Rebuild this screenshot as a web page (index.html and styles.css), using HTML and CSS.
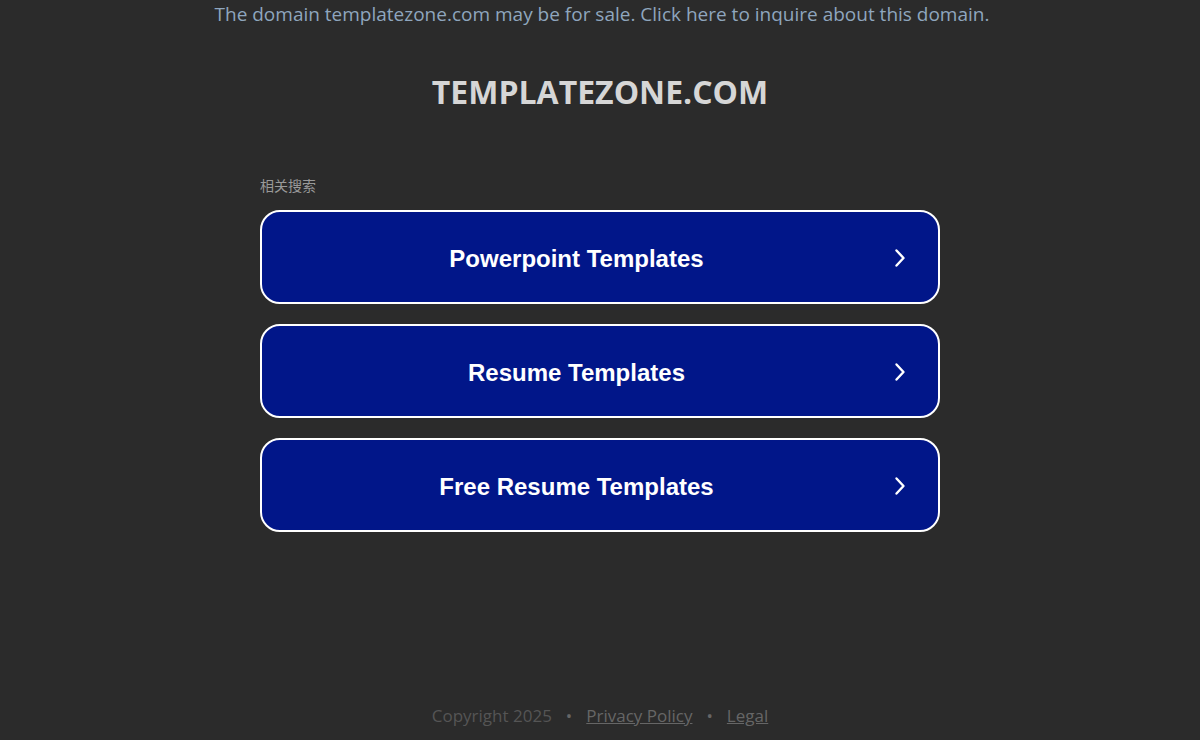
FILE: index.html
```html
<!DOCTYPE html>
<html lang="en">
<head>
<meta charset="utf-8">
<title>templatezone.com</title>
<link rel="stylesheet" href="styles.css">
</head>
<body>
<div class="page">
  <header class="top">
    <a class="sale" href="#">The domain templatezone.com may be for sale. Click here to inquire about this domain.</a>
    <h1 class="domain">TEMPLATEZONE.COM</h1>
  </header>
  <main class="content">
    <div class="label">相关搜索</div>
    <ul class="links">
      <li><a class="btn" href="#"><span class="btn-text">Powerpoint Templates</span><svg class="chev" viewBox="0 0 14 20" width="14" height="20"><path d="M3.5 2.5 L10.5 10 L3.5 17.5" fill="none" stroke="#fff" stroke-width="2.4" stroke-linecap="round" stroke-linejoin="round"/></svg></a></li>
      <li><a class="btn" href="#"><span class="btn-text">Resume Templates</span><svg class="chev" viewBox="0 0 14 20" width="14" height="20"><path d="M3.5 2.5 L10.5 10 L3.5 17.5" fill="none" stroke="#fff" stroke-width="2.4" stroke-linecap="round" stroke-linejoin="round"/></svg></a></li>
      <li><a class="btn" href="#"><span class="btn-text">Free Resume Templates</span><svg class="chev" viewBox="0 0 14 20" width="14" height="20"><path d="M3.5 2.5 L10.5 10 L3.5 17.5" fill="none" stroke="#fff" stroke-width="2.4" stroke-linecap="round" stroke-linejoin="round"/></svg></a></li>
    </ul>
  </main>
  <footer class="foot">
    <span>Copyright 2025</span>
    <span class="dot">•</span>
    <a href="#">Privacy Policy</a>
    <span class="dot">•</span>
    <a href="#">Legal</a>
  </footer>
</div>
</body>
</html>
```
FILE: styles.css
```css
html, body {
  margin: 0;
  padding: 0;
  background: #2b2b2b;
  height: 100%;
}
.page {
  height: 740px;
  display: flex;
  flex-direction: column;
  align-items: center;
  font-family: "Open Sans", "Noto Sans", sans-serif;
}
.top {
  display: flex;
  flex-direction: column;
  align-items: center;
}
.sale {
  color: #8fa6be;
  text-decoration: none;
  font-size: 19px;
  line-height: 28px;
  margin-left: 4px;
}
.domain {
  margin: 45px 0 0;
  color: #d6d6d6;
  font-size: 32px;
  font-weight: 700;
  line-height: 38px;
}
.content {
  width: 680px;
  margin-top: 64px;
}
.label {
  color: #999;
  font-size: 14px;
  line-height: 20px;
  font-family: "Noto Sans CJK SC", sans-serif;
}
.links {
  list-style: none;
  margin: 15px 0 0;
  padding: 0;
  display: flex;
  flex-direction: column;
  gap: 20px;
}
.btn {
  box-sizing: border-box;
  height: 94px;
  border: 2px solid #fff;
  border-radius: 20px;
  background: #011689;
  display: flex;
  align-items: center;
  justify-content: center;
  position: relative;
  text-decoration: none;
  color: #fff;
  font-family: "Liberation Sans", Arial, sans-serif;
  font-weight: 700;
  font-size: 24px;
  padding-top: 3px;
}
.btn-text {
  margin-left: -47px;
}
.chev {
  position: absolute;
  right: 31px;
  top: 36px;
}
.foot {
  margin-top: auto;
  margin-bottom: 12px;
  display: flex;
  gap: 14px;
  color: #555;
  font-size: 17px;
  line-height: 24px;
}
.foot a {
  color: #666;
}
.dot {
  color: #666;
}
```
